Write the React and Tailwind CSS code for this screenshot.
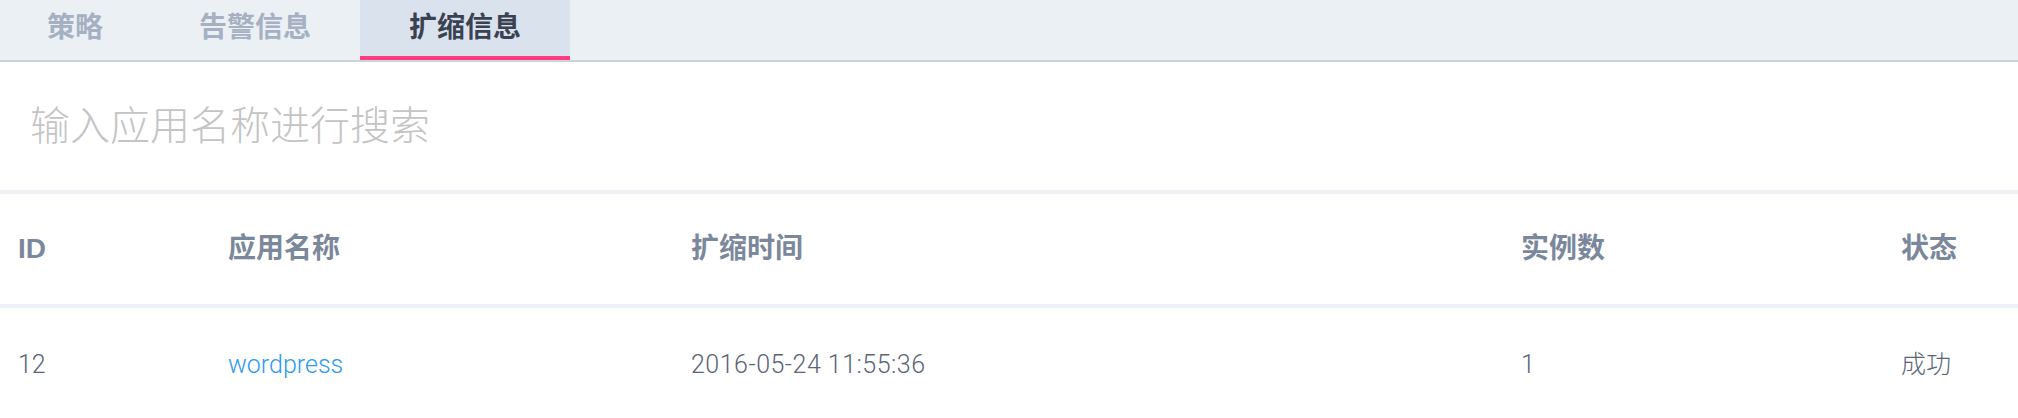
export default function App() {
  const font = { fontFamily: '"Liberation Sans", "Noto Sans CJK SC", sans-serif' };
  const light = { fontFamily: 'Roboto, "Noto Sans CJK SC", sans-serif' };
  const tabs = [
    { label: "策略", w: "w-[150px]", active: false },
    { label: "告警信息", w: "w-[210px]", active: false },
    { label: "扩缩信息", w: "w-[210px]", active: true },
  ];
  const cols = "grid grid-cols-[210px_463px_830px_380px_1fr] pl-[18px]";
  return (
    <div className="w-[2018px] h-[418px] bg-white overflow-hidden" style={font}>
      <div className="flex h-[62px] bg-[#ebf0f5] border-b-2 border-[#cdd3da]">
        {tabs.map((t) => (
          <div
            key={t.label}
            className={
              t.active
                ? `${t.w} h-[60px] flex items-center justify-center border-b-4 border-[#ff3d7f] bg-[#dae2ee] text-[28px] font-bold text-[#3a4252]`
                : `${t.w} h-[60px] flex items-center justify-center border-b-4 border-transparent text-[28px] font-bold text-[#a5b0c2]`
            }
          >
            {t.label}
          </div>
        ))}
      </div>
      <div className="h-[132px] flex items-center pl-[30px] border-b-4 border-[#eef2f6]">
        <input
          className="w-full outline-none bg-transparent text-[40px] font-light text-[#555] placeholder:text-[#c4c4c4]"
          style={font}
          placeholder="输入应用名称进行搜索"
        />
      </div>
      <div className={`${cols} h-[114px] items-center border-b-4 border-[#eef2f6] text-[28px] font-bold text-[#7b889c]`}>
        <div>ID</div>
        <div>应用名称</div>
        <div>扩缩时间</div>
        <div>实例数</div>
        <div>状态</div>
      </div>
      <div
        className={`${cols} h-[110px] items-center pt-[3px] text-[25px] font-light text-[#5a6576]`}
        style={light}
      >
        <div>12</div>
        <div className="text-[#2d9bf0]">wordpress</div>
        <div className="tracking-[0.5px]">2016-05-24 11:55:36</div>
        <div>1</div>
        <div>成功</div>
      </div>
    </div>
  );
}
